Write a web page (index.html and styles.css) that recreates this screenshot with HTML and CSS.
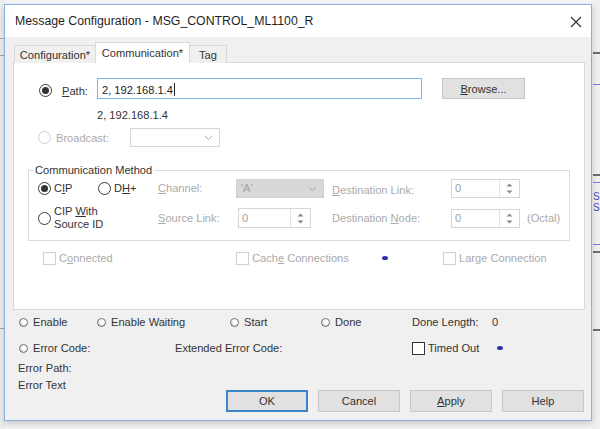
FILE: index.html
```html
<!DOCTYPE html>
<html>
<head>
<meta charset="utf-8">
<link rel="stylesheet" href="styles.css">
</head>
<body>
<div class="desk">
  <div class="bg-left">
    <span class="bl bl1"></span>
    <span class="bl bl2"></span>
    <span class="bl bl3"></span>
  </div>
  <div class="bg-right">
    <span class="br br1"></span>
    <span class="br br2"></span>
    <span class="br br3"></span>
    <span class="br br4"></span>
    <span class="brt brt1">S</span>
    <span class="brt brt2">S</span>
    <span class="br br5"></span>
    <span class="br br6"></span>
    <span class="br br7"></span>
  </div>

  <div class="window">
    <div class="titlebar">
      <span class="title">Message Configuration - MSG_CONTROL_ML1100_R</span>
      <svg class="close" width="12" height="12" viewBox="0 0 12 12"><path d="M1 1 L11 11 M11 1 L1 11" stroke="#333" stroke-width="1.2" fill="none"/></svg>
    </div>
    <div class="body">
      <div class="tabs">
        <div class="tab t-conf">Configuration*</div>
        <div class="tab t-comm active">Communication*</div>
        <div class="tab t-tag">Tag</div>
      </div>
      <div class="panel">
        <div class="row path-row">
          <span class="radio checked"></span>
          <span class="lbl path-lbl"><u>P</u>ath:</span>
          <div class="textbox">2, 192.168.1.4<span class="caret"></span></div>
          <div class="btn browse"><u>B</u>rowse...</div>
        </div>
        <div class="path-echo">2, 192.168.1.4</div>
        <div class="row bc-row">
          <span class="radio disabled"></span>
          <span class="lbl dis bc-lbl">Broadcast:</span>
          <div class="select white">
            <svg class="chev" width="9" height="6" viewBox="0 0 9 6"><path d="M1 1 L4.5 4.5 L8 1" stroke="#aaa" fill="none"/></svg>
          </div>
        </div>

        <fieldset class="group">
          <legend>Communication Method</legend>
          <div class="grow row-a">
            <div class="cell c-cip"><span class="radio checked"></span><span class="lbl">C<u>I</u>P</span></div>
            <div class="cell c-dh"><span class="radio"></span><span class="lbl">D<u>H</u>+</span></div>
            <span class="lbl dis c-chan"><u>C</u>hannel:</span>
            <div class="select grey"><span>'A'</span>
              <svg class="chev" width="9" height="6" viewBox="0 0 9 6"><path d="M1 1 L4.5 4.5 L8 1" stroke="#aaa" fill="none"/></svg>
            </div>
            <span class="lbl dis c-dest"><u>D</u>estination Link:</span>
            <div class="spin s-dl"><span class="val">0</span><span class="arrows"><svg width="7" height="13" viewBox="0 0 7 13"><path d="M0.5 4.5 L3.5 1.5 L6.5 4.5 Z M0.5 8.5 L3.5 11.5 L6.5 8.5 Z" fill="#888"/></svg></span></div>
          </div>
          <div class="grow row-b">
            <div class="cell c-cipw"><span class="radio"></span><span class="lbl two">CIP <u>W</u>ith<br>Source ID</span></div>
            <span class="lbl dis c-src"><u>S</u>ource Link:</span>
            <div class="spin s-sl"><span class="val">0</span><span class="arrows"><svg width="7" height="13" viewBox="0 0 7 13"><path d="M0.5 4.5 L3.5 1.5 L6.5 4.5 Z M0.5 8.5 L3.5 11.5 L6.5 8.5 Z" fill="#888"/></svg></span></div>
            <span class="lbl dis c-dest2">Destination <u>N</u>ode:</span>
            <div class="spin s-dn"><span class="val">0</span><span class="arrows"><svg width="7" height="13" viewBox="0 0 7 13"><path d="M0.5 4.5 L3.5 1.5 L6.5 4.5 Z M0.5 8.5 L3.5 11.5 L6.5 8.5 Z" fill="#888"/></svg></span></div>
            <span class="lbl dis octal">(Octal)</span>
          </div>
        </fieldset>

        <div class="row chk-row">
          <div class="ccell cc-conn"><span class="check dis"></span><span class="lbl dis">C<u>o</u>nnected</span></div>
          <div class="ccell cc-cache"><span class="check dis"></span><span class="lbl dis">Cach<u>e</u> Connections</span><span class="dot cache-dot"></span></div>
          <div class="ccell"><span class="check dis"></span><span class="lbl dis">Large Connection</span></div>
        </div>
      </div>

      <div class="status">
        <div class="srow">
          <div class="sc sc-en"><span class="led"></span><span class="lbl">Enable</span></div>
          <div class="sc sc-ew"><span class="led"></span><span class="lbl">Enable Waiting</span></div>
          <div class="sc sc-st"><span class="led"></span><span class="lbl">Start</span></div>
          <div class="sc sc-dn"><span class="led"></span><span class="lbl">Done</span></div>
          <div class="sc sc-dl"><span class="lbl">Done Length:</span></div>
          <div class="sc"><span class="lbl">0</span></div>
        </div>
        <div class="srow">
          <div class="sc sc-ec"><span class="led"></span><span class="lbl">Error Code:</span></div>
          <div class="sc sc-eec"><span class="lbl">Extended Error Code:</span></div>
          <div class="sc"><span class="check"></span><span class="lbl to-lbl">Timed Out</span><span class="dot to-dot"></span></div>
        </div>
        <div class="bottom">
          <div class="errs">
            <div class="lbl err">Error Path:</div>
            <div class="lbl err err2">Error Text</div>
          </div>
          <div class="buttons">
            <div class="btn dlg ok">OK</div>
            <div class="btn dlg">Cancel</div>
            <div class="btn dlg"><u>A</u>pply</div>
            <div class="btn dlg">Help</div>
          </div>
        </div>
      </div>
    </div>
  </div>
</div>
</body>
</html>
```
FILE: styles.css
```css
* { box-sizing: border-box; }
html, body { margin: 0; padding: 0; }
body {
  width: 600px; height: 429px; overflow: hidden;
  font-family: "Liberation Sans", Arial, sans-serif;
  font-size: 11.1px; color: #333;
  background: #f4f4f4;
}
.desk { position: relative; width: 600px; height: 429px; }

.bg-left { position: absolute; left: 0; top: 0; width: 5px; height: 429px; background: #ececec; }
.bl { position: absolute; left: 0; width: 4px; height: 1px; background: #9aa0b8; }
.bl1 { top: 38px; background: #b0b0b0; }
.bl2 { top: 55px; }
.bl3 { top: 328px; }
.bg-right { position: absolute; left: 592px; top: 0; width: 8px; height: 429px; background: #efefef; overflow: hidden; }
.br { position: absolute; left: 1px; width: 8px; height: 2px; background: #6f6f6f; }
.br1 { top: 52px; }
.br2 { top: 84px; height: 1px; background: #7a7ad8; }
.br3 { top: 174px; }
.br4 { top: 182px; height: 1px; background: #7a7ad8; }
.br5 { top: 244px; height: 1px; background: #7a7ad8; }
.br6 { top: 251px; }
.br7 { top: 329px; }
.brt { position: absolute; left: 1px; font-size: 10px; color: #4a4ac8; line-height: 11px; }
.brt1 { top: 191px; }
.brt2 { top: 202px; }

.window {
  position: absolute; left: 4px; top: 4px; width: 588px; height: 417px;
  border: 1px solid #86b0e0; background: #f0f0f0;
  box-shadow: 0 3px 6px rgba(0,0,0,0.18);
  display: flex; flex-direction: column;
}
.titlebar {
  height: 32px; background: #fff; display: flex; align-items: center;
  padding: 0 0 0 10px; flex: none;
}
.title { font-size: 12.3px; color: #1f1f1f; flex: 1; }
.close { margin-right: 9px; margin-top: 1px; }

.body { flex: 1; padding: 0 0 0 8px; }
.tabs { display: flex; align-items: flex-end; height: 26px; padding-left: 1px; position: relative; z-index: 1; margin-bottom: -1px; }
.tab {
  height: 18px; border: 1px solid #d9d9d9; border-bottom: none; background: #f0f0f0;
  display: flex; align-items: center; justify-content: center; color: #333; padding-top: 1px;
}
.t-conf { width: 82px; margin-right: -1px; }
.t-comm { width: 95px; height: 21px; background: #fff; border-color: #d9d9d9; padding-top: 0; padding-bottom: 1px; }
.t-tag { width: 38px; margin-left: -1px; }

.panel {
  width: 572px; height: 248px; background: #fff; border: 1px solid #d9d9d9;
  display: flow-root;
}
.row { display: flex; align-items: center; }
.lbl { white-space: nowrap; }
.dis { color: #aaaaaa; }

.radio {
  width: 13px; height: 13px; border-radius: 50%; border: 1px solid #3a3a3a; background: #fff;
  flex: none; display: inline-flex; align-items: center; justify-content: center;
}
.radio.checked::after { content: ""; width: 7px; height: 7px; border-radius: 50%; background: #333; }
.radio.disabled { border-color: #cfcfcf; }

.path-row { margin-top: 15px; height: 21px; padding-left: 25px; }
.path-row .radio, .path-lbl { margin-top: 4px; }
.path-lbl { margin-left: 10px; width: 35px; }
.textbox {
  width: 325px; height: 21px; border: 1px solid #7eb4ea; padding-left: 4px; padding-top: 2px;
  display: flex; align-items: center; color: #222;
}
.caret { width: 1px; height: 13px; background: #222; margin-left: 1px; }
.btn {
  background: #e1e1e1; border: 1px solid #c6c6c6; display: flex; align-items: center; justify-content: center; color: #333;
}
.browse { margin-left: 20px; width: 83px; height: 21px; }

.path-echo { margin: 9px 0 0 83px; height: 14px; line-height: 14px; }
.bc-row { margin-top: 6px; height: 19px; padding-left: 24px; }
.bc-lbl { margin-left: 5px; width: 74px; }
.select {
  height: 19px; border: 1px solid #d6d6d6; position: relative; display: flex; align-items: center; padding-left: 4px;
}
.select.white { width: 90px; background: #fff; }
.select.grey { width: 88px; background: #d8d8d8; border-color: #d0d0d0; color: #a0a0a0; }
.chev { position: absolute; right: 6px; top: 6px; }

.group {
  margin: 16px 0 0 14px; padding: 0 0 12px 0; width: 542px;
  border: 1px solid #dcdcdc; min-width: 0;
}
.group legend { margin-left: 4px; padding: 0 2px; color: #333; line-height: 14px; }
.grow { display: flex; align-items: center; height: 20px; padding-left: 9px; }
.row-a { margin-top: 1px; }
.row-b { margin-top: 10px; }
.cell { display: flex; align-items: center; flex: none; }
.cell .lbl { margin-left: 3px; }
.c-cip { width: 60px; }
.c-dh { width: 60px; }
.c-chan { width: 78px; }
.c-dest { width: 119px; margin-left: 8px; padding-top: 3px; }
.c-cipw { width: 120px; }
.two { line-height: 13px; }
.c-src { width: 80px; }
.c-dest2 { width: 119px; margin-left: 21px; }
.octal { margin-left: 7px; }
.spin {
  height: 20px; border: 1px solid #d6d6d6; background: #fff; display: flex; align-items: stretch;
}
.spin .val { flex: 1; padding-left: 3px; color: #a0a0a0; display: flex; align-items: center; }
.spin .arrows { width: 20px; border-left: 1px solid #e2e2e2; display: flex; align-items: center; justify-content: center; }
.s-dl { width: 69px; height: 19px; }
.s-sl { width: 73px; }
.s-dn { width: 69px; height: 19px; }

.chk-row { margin-top: 10px; height: 14px; padding-left: 29px; }
.ccell { display: flex; align-items: center; }
.cc-conn { width: 193px; }
.cc-cache { width: 207px; }
.ccell .lbl { margin-left: 3px; }
.check { width: 13px; height: 13px; border: 1px solid #333; background: #fff; flex: none; }
.check.dis { border-color: #d0d0d0; }
.dot { width: 6px; height: 4px; background: #2f2fb0; border-radius: 50%; flex: none; }
.cache-dot { margin-left: 33px; }

.status { padding-left: 6px; }
.srow { display: flex; align-items: center; height: 24px; }
.srow + .srow { margin-top: 2px; }
.sc { display: flex; align-items: center; flex: none; }
.led {
  width: 9px; height: 9px; border-radius: 50%; flex: none;
  border: 1px solid #707070;
  background: radial-gradient(circle at 65% 35%, #fff 0 35%, #d8d8d8 70%, #a0a0a0 100%);
  margin-right: 5px;
}
.sc-en { width: 78px; }
.sc-ew { width: 133px; }
.sc-st { width: 91px; }
.sc-dn { width: 91px; }
.sc-dl { width: 80px; }
.sc-ec { width: 156px; }
.sc-eec { width: 237px; }
.to-lbl { margin-left: 3px; }
.to-dot { margin-left: 18px; }

.bottom { display: flex; align-items: flex-start; }
.errs { width: 207px; padding-top: 1px; }
.err { height: 14px; line-height: 14px; margin-left: -1px; }
.err2 { margin-top: 3px; }
.buttons { display: flex; gap: 10px; margin-top: 30px; }
.dlg { width: 82px; height: 22px; }
.dlg.ok { border: 2px solid #3d84c6; }
```
